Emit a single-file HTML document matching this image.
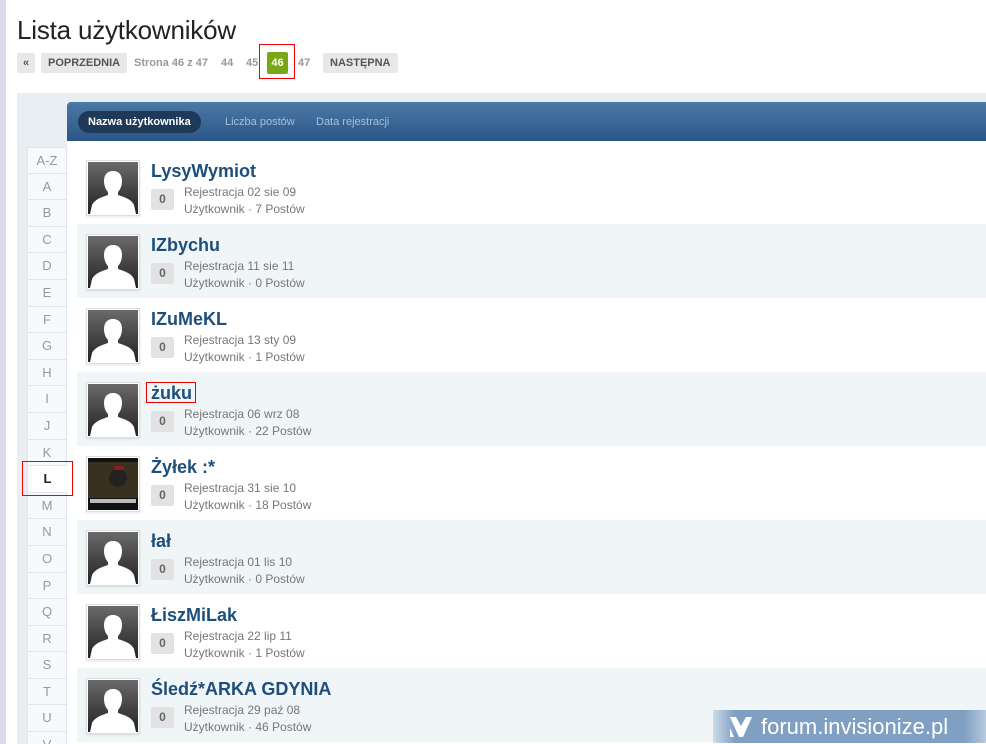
<!DOCTYPE html>
<html style="overflow:hidden;width:986px;height:744px"><head><meta charset="utf-8"><style>
*{margin:0;padding:0;box-sizing:border-box}
body{width:986px;height:744px;overflow:hidden;background:#fff;font-family:"Liberation Sans",Arial,sans-serif;position:relative}
.strip{position:absolute;left:0;top:0;width:6px;height:744px;background:#d9dce8}
h1{position:absolute;left:17px;top:15px;font-size:26px;font-weight:normal;color:#222;letter-spacing:-0.2px}
.pg{position:absolute;top:53px;height:20px;font-size:11px;font-weight:bold;line-height:20px;color:#999}
.btn{background:#e8e8e8;color:#555;padding:0 7px;border-radius:2px}
.panel{position:absolute;left:17px;top:93px;width:969px;height:651px;background:#e9eef2}
.hdr{position:absolute;left:67px;top:102px;width:919px;height:39px;background:linear-gradient(#4c78a6,#2b5788);border-radius:4px 0 0 0}
.tab{position:absolute;top:9px;height:22px;line-height:22px;font-size:11px;color:#a9bfd8}
.tab.on{left:11px;background:#1f3a58;color:#fff;font-weight:bold;padding:0 10px;border-radius:11px}
.content{position:absolute;left:67px;top:141px;width:919px;height:603px;background:#fff}
.side{position:absolute;left:27px;top:147px;width:40px;height:597px;overflow:hidden}
.side div{height:26.6px;line-height:26px;text-align:center;font-size:13px;color:#999;background:#f7f9fc;border:1px solid #dde5ee;border-top:none}
.side div:first-child{border-top:1px solid #dde5ee}
.side .on{background:#fff;color:#222;font-weight:bold;border-right:none}
.row{position:absolute;left:77px;width:909px;height:74px}
.row.alt{background:#f0f5f8}
.av{position:absolute;left:9px;top:10px;width:54px;height:56px;background:#fff;border:1px solid #ddd;padding:1px;box-shadow:0 1px 2px rgba(0,0,0,.1)}
.av svg{display:block;width:50px;height:52px}
.nm{position:absolute;left:74px;top:11px;font-size:18px;font-weight:bold;color:#1d4f7a}
.bd{position:absolute;left:74px;top:39px;width:23px;height:21px;background:#e2e2e2;border-radius:2px;text-align:center;line-height:21px;font-size:12px;font-weight:bold;color:#666}
.dt{position:absolute;left:107px;top:34px;font-size:12px;color:#777;line-height:16.5px}
.red{position:absolute;border:1px solid #e00}
.wm{position:absolute;left:713px;top:710px;width:273px;height:33px;background:linear-gradient(90deg,rgba(127,159,195,.3),#7f9fc3 8%,#7f9fc3 92%,rgba(127,159,195,.5));color:#fff;font-size:22px;line-height:33px;padding-left:48px}
</style></head><body>
<div class="strip"></div>
<h1>Lista użytkowników</h1>
<div class="pg btn" style="left:17px;padding:0 6px">«</div>
<div class="pg btn" style="left:41px">POPRZEDNIA</div>
<div class="pg" style="left:134px">Strona 46 z 47</div>
<div class="pg" style="left:221px">44</div>
<div class="pg" style="left:246px">45</div>
<div class="pg" style="left:267px;background:#7ba617;color:#fff;width:21px;text-align:center;border-radius:2px;height:22px;line-height:22px;top:52px">46</div>
<div class="pg" style="left:298px">47</div>
<div class="pg btn" style="left:323px">NASTĘPNA</div>
<div class="red" style="left:259px;top:44px;width:36px;height:35px"></div>
<div class="panel"></div>
<div class="hdr"><div class="tab on">Nazwa użytkownika</div><div class="tab" style="left:158px">Liczba postów</div><div class="tab" style="left:249px">Data rejestracji</div></div>
<div class="content"></div>
<div class="side">
<div>A-Z</div><div>A</div><div>B</div><div>C</div><div>D</div><div>E</div><div>F</div><div>G</div><div>H</div><div>I</div><div>J</div><div>K</div><div class="on">L</div><div>M</div><div>N</div><div>O</div><div>P</div><div>Q</div><div>R</div><div>S</div><div>T</div><div>U</div><div>V</div>
</div>
<div class="red" style="left:22px;top:461px;width:51px;height:35px"></div>
<svg width="0" height="0" style="position:absolute"><defs><linearGradient id="g" x1="0" y1="0" x2="0" y2="1"><stop offset="0" stop-color="#6a6a6a"/><stop offset="1" stop-color="#222"/></linearGradient></defs></svg>

<div class="row" style="top:150px"><div class="av"><svg viewBox="0 0 50 52"><rect width="50" height="52" fill="url(#g)"/><path d="M25 9c-6 0-9 4-9 10 0 5 2 9 4 11v3c-6 2-13 4-16 10l-2 9h46l-2-9c-3-6-10-8-16-10v-3c2-2 4-6 4-11 0-6-3-10-9-10z" fill="#fff"/></svg></div><div class="nm">LysyWymiot</div><div class="bd">0</div><div class="dt">Rejestracja 02 sie 09<br>Użytkownik · 7 Postów</div></div>
<div class="row alt" style="top:224px"><div class="av"><svg viewBox="0 0 50 52"><rect width="50" height="52" fill="url(#g)"/><path d="M25 9c-6 0-9 4-9 10 0 5 2 9 4 11v3c-6 2-13 4-16 10l-2 9h46l-2-9c-3-6-10-8-16-10v-3c2-2 4-6 4-11 0-6-3-10-9-10z" fill="#fff"/></svg></div><div class="nm">IZbychu</div><div class="bd">0</div><div class="dt">Rejestracja 11 sie 11<br>Użytkownik · 0 Postów</div></div>
<div class="row" style="top:298px"><div class="av"><svg viewBox="0 0 50 52"><rect width="50" height="52" fill="url(#g)"/><path d="M25 9c-6 0-9 4-9 10 0 5 2 9 4 11v3c-6 2-13 4-16 10l-2 9h46l-2-9c-3-6-10-8-16-10v-3c2-2 4-6 4-11 0-6-3-10-9-10z" fill="#fff"/></svg></div><div class="nm">IZuMeKL</div><div class="bd">0</div><div class="dt">Rejestracja 13 sty 09<br>Użytkownik · 1 Postów</div></div>
<div class="row alt" style="top:372px"><div class="av"><svg viewBox="0 0 50 52"><rect width="50" height="52" fill="url(#g)"/><path d="M25 9c-6 0-9 4-9 10 0 5 2 9 4 11v3c-6 2-13 4-16 10l-2 9h46l-2-9c-3-6-10-8-16-10v-3c2-2 4-6 4-11 0-6-3-10-9-10z" fill="#fff"/></svg></div><div class="nm">żuku</div><div class="bd">0</div><div class="dt">Rejestracja 06 wrz 08<br>Użytkownik · 22 Postów</div></div>
<div class="red" style="left:146px;top:382px;width:50px;height:21px"></div>
<div class="row" style="top:446px"><div class="av"><svg viewBox="0 0 50 52"><rect width="50" height="52" fill="#111"/><rect y="4" width="50" height="36" fill="#3a3020"/><circle cx="30" cy="20" r="9" fill="#222"/><rect x="26" y="8" width="10" height="4" fill="#8a1d1d"/><rect x="2" y="41" width="46" height="4" fill="#bbb"/></svg></div><div class="nm">Żyłek :*</div><div class="bd">0</div><div class="dt">Rejestracja 31 sie 10<br>Użytkownik · 18 Postów</div></div>
<div class="row alt" style="top:520px"><div class="av"><svg viewBox="0 0 50 52"><rect width="50" height="52" fill="url(#g)"/><path d="M25 9c-6 0-9 4-9 10 0 5 2 9 4 11v3c-6 2-13 4-16 10l-2 9h46l-2-9c-3-6-10-8-16-10v-3c2-2 4-6 4-11 0-6-3-10-9-10z" fill="#fff"/></svg></div><div class="nm">łał</div><div class="bd">0</div><div class="dt">Rejestracja 01 lis 10<br>Użytkownik · 0 Postów</div></div>
<div class="row" style="top:594px"><div class="av"><svg viewBox="0 0 50 52"><rect width="50" height="52" fill="url(#g)"/><path d="M25 9c-6 0-9 4-9 10 0 5 2 9 4 11v3c-6 2-13 4-16 10l-2 9h46l-2-9c-3-6-10-8-16-10v-3c2-2 4-6 4-11 0-6-3-10-9-10z" fill="#fff"/></svg></div><div class="nm">ŁiszMiLak</div><div class="bd">0</div><div class="dt">Rejestracja 22 lip 11<br>Użytkownik · 1 Postów</div></div>
<div class="row alt" style="top:668px"><div class="av"><svg viewBox="0 0 50 52"><rect width="50" height="52" fill="url(#g)"/><path d="M25 9c-6 0-9 4-9 10 0 5 2 9 4 11v3c-6 2-13 4-16 10l-2 9h46l-2-9c-3-6-10-8-16-10v-3c2-2 4-6 4-11 0-6-3-10-9-10z" fill="#fff"/></svg></div><div class="nm">Śledź*ARKA GDYNIA</div><div class="bd">0</div><div class="dt">Rejestracja 29 paź 08<br>Użytkownik · 46 Postów</div></div>
<div class="wm"><svg style="position:absolute;left:16px;top:6px" width="24" height="22" viewBox="0 0 24 22"><path d="M1 1h6l5 9 5-9h6L14 21h-4z" fill="#fff"/><path d="M1 12l4 9H1z" fill="#fff"/></svg>forum.invisionize.pl</div>
</body></html>
